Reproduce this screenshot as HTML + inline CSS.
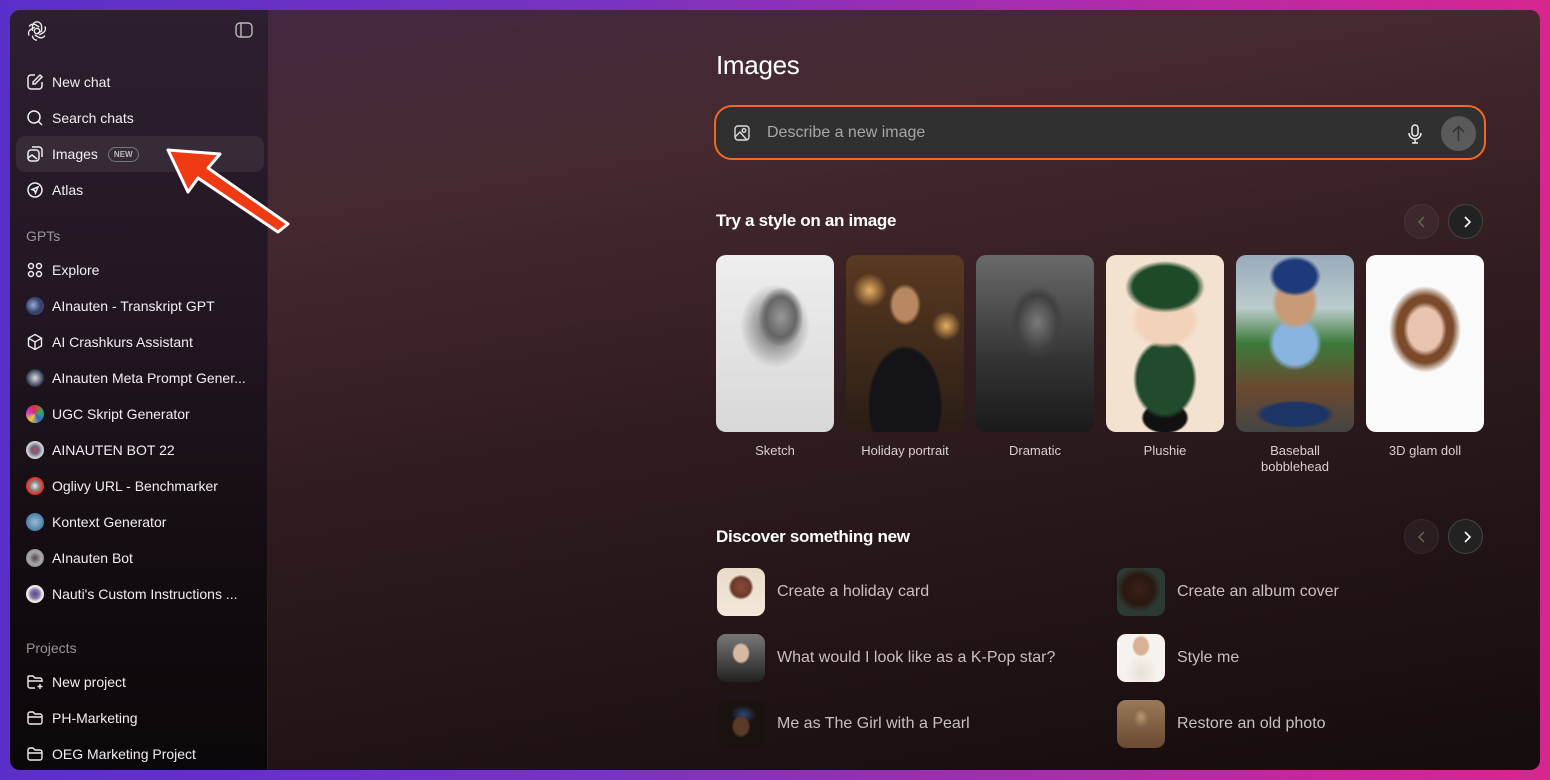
<!DOCTYPE html>
<html><head><meta charset="utf-8">
<style>
*{box-sizing:border-box;margin:0;padding:0}
body{width:1550px;height:780px;overflow:hidden;font-family:"Liberation Sans",sans-serif;background:linear-gradient(90deg,#5a2fc9 0%,#7a33c0 40%,#b52aa8 75%,#d8268f 100%);position:relative}
.win{position:absolute;left:10px;top:10px;width:1530px;height:760px;border-radius:10px;overflow:hidden;background:linear-gradient(170deg,#432843 0%,#45292f 25%,#2e1b1e 55%,#140c0d 100%)}
.side{position:absolute;left:0;top:0;width:258px;height:760px;background:linear-gradient(180deg,#2d1f2f 0%,#221622 40%,#120b10 75%,#0c0709 100%);border-right:1px solid #2a2028}
.it{position:absolute;left:16px;height:20px;display:flex;align-items:center;color:#f2eef2;font-size:14px}
.it svg,.it .av{width:18px;height:18px;margin-right:8px;flex:none}
.av{border-radius:50%}
.lab{position:absolute;left:16px;color:#9c9299;font-size:14px}
.main{position:absolute;left:706px;top:0}
h1{position:absolute;left:706px;top:40px;color:#fff;font-size:26px;font-weight:normal;letter-spacing:-0.3px}
.inp{position:absolute;left:704px;top:95px;width:772px;height:55px;border:2px solid #f06a24;border-radius:18px;background:#303030}
.inp .ph{position:absolute;left:51px;top:17px;color:#a7a7a7;font-size:16px}
.send{position:absolute;right:8px;top:9px;width:35px;height:35px;border-radius:50%;background:#5a5a5a}
h2{position:absolute;color:#fff;font-size:17px;font-weight:bold;letter-spacing:-0.3px}
.nav{position:absolute;width:35px;height:35px;border-radius:50%}
.nav.p{background:rgba(255,255,255,0.04);border:1px solid rgba(255,255,255,0.06)}
.nav.n{background:#222;border:1px solid #444}
.card{position:absolute;top:245px;width:118px;height:177px;border-radius:10px;overflow:hidden}
.cl{position:absolute;top:433px;width:118px;text-align:center;color:#d8d0d0;font-size:13px;line-height:16px}
.dt{position:absolute;width:48px;height:48px;border-radius:9px;overflow:hidden}
.dl{position:absolute;color:#c8c0c0;font-size:16px}
</style></head><body>
<div class="win">
<div class="side">
<svg style="position:absolute;left:16px;top:10px" width="22" height="22" viewBox="0 0 24 24" fill="none" stroke="#eee" stroke-width="1.5"><circle cx="12" cy="12" r="3"/><path d="M12 2a5 5 0 0 1 5 5v5l-5 3M12 2a5 5 0 0 0-5 5v5M3.4 7a5 5 0 0 1 6.8-1.8l4.3 2.5M20.6 7a5 5 0 0 1 -1.8 6.8l-4.3 2.5M20.6 17a5 5 0 0 1-6.8 1.8l-4.3-2.5M3.4 17a5 5 0 0 1 1.8-6.8l4.3-2.5M12 22a5 5 0 0 1-5-5"/></svg>
<svg style="position:absolute;left:225px;top:12px" width="18" height="16" viewBox="0 0 18 16" fill="none" stroke="#bbb" stroke-width="1.4"><rect x="1" y="1" width="16" height="14" rx="4"/><path d="M6 1v14"/></svg>
<div class="it" style="top:62px"><svg viewBox="0 0 18 18" fill="none" stroke="#eee" stroke-width="1.5"><path d="M9 2H5a3 3 0 0 0-3 3v8a3 3 0 0 0 3 3h8a3 3 0 0 0 3-3V9"/><path d="M14 2l2 2-7 7H7V9z"/></svg>New chat</div>
<div class="it" style="top:98px"><svg viewBox="0 0 18 18" fill="none" stroke="#eee" stroke-width="1.5"><circle cx="8" cy="8" r="6"/><path d="M12.5 12.5L16 16"/></svg>Search chats</div>
<div style="position:absolute;left:6px;top:126px;width:248px;height:36px;border-radius:9px;background:rgba(255,255,255,0.07)"></div>
<div class="it" style="top:134px"><svg viewBox="0 0 18 18" fill="none" stroke="#eee" stroke-width="1.5"><rect x="2" y="5" width="11" height="11" rx="3"/><path d="M6 2h7a3 3 0 0 1 3 3v7M2 13l4-3 5 4"/></svg>Images<span style="margin-left:10px;border:1px solid #777;border-radius:8px;font-size:8px;font-weight:bold;color:#bbb;padding:2px 5px">NEW</span></div>
<div class="it" style="top:170px"><svg viewBox="0 0 18 18" fill="none" stroke="#eee" stroke-width="1.5"><circle cx="9" cy="9" r="7"/><path d="M12 6L6 8.5 8.5 9.5 9.5 12z"/></svg>Atlas</div>
<div class="lab" style="top:218px">GPTs</div>
<div class="it" style="top:250px"><svg viewBox="0 0 18 18" fill="none" stroke="#eee" stroke-width="1.5"><circle cx="5" cy="5" r="2.5"/><circle cx="13" cy="5" r="2.5"/><circle cx="5" cy="13" r="2.5"/><circle cx="13" cy="13" r="2.5"/></svg>Explore</div>
<div class="it" style="top:286px"><span class="av" style="background:radial-gradient(circle at 40% 45%,#9ad 0,#346 50%,#5a3a8a 100%)"></span>AInauten - Transkript GPT</div>
<div class="it" style="top:322px"><svg viewBox="0 0 18 18" fill="none" stroke="#eee" stroke-width="1.4"><path d="M9 1.5l6.5 3.7v7.6L9 16.5l-6.5-3.7V5.2zM2.5 5.2L9 9l6.5-3.8M9 9v7.5"/></svg>AI Crashkurs Assistant</div>
<div class="it" style="top:358px"><span class="av" style="background:radial-gradient(circle,#ddd 0,#889 35%,#234 70%)"></span>AInauten Meta Prompt Gener...</div>
<div class="it" style="top:394px"><span class="av" style="background:conic-gradient(#d33,#3a6,#36c,#ec3,#c3c,#d33)"></span>UGC Skript Generator</div>
<div class="it" style="top:430px"><span class="av" style="background:radial-gradient(circle,#c44 0,#668 30%,#ccc 60%)"></span>AINAUTEN BOT 22</div>
<div class="it" style="top:466px"><span class="av" style="background:radial-gradient(circle,#eee 0,#888 35%,#d32 65%)"></span>Oglivy URL - Benchmarker</div>
<div class="it" style="top:502px"><span class="av" style="background:radial-gradient(circle,#9bd 0,#58a 60%,#357 100%)"></span>Kontext Generator</div>
<div class="it" style="top:538px"><span class="av" style="background:radial-gradient(circle,#545 0,#aaa 50%,#667 100%)"></span>AInauten Bot</div>
<div class="it" style="top:574px"><span class="av" style="background:radial-gradient(circle,#534a8a 0,#87a 35%,#eee 60%)"></span>Nauti's Custom Instructions ...</div>
<div class="lab" style="top:630px">Projects</div>
<div class="it" style="top:662px"><svg viewBox="0 0 18 18" fill="none" stroke="#eee" stroke-width="1.4"><path d="M9 15H4a2 2 0 0 1-2-2V4a1 1 0 0 1 1-1h4l2 2h5a2 2 0 0 1 2 2v2M2 8h14M14 11v5M11.5 13.5h5"/></svg>New project</div>
<div class="it" style="top:698px"><svg viewBox="0 0 18 18" fill="none" stroke="#eee" stroke-width="1.4"><path d="M2 5a2 2 0 0 1 2-2h3l2 2h5a2 2 0 0 1 2 2v6a2 2 0 0 1-2 2H4a2 2 0 0 1-2-2zM2 8h14"/></svg>PH-Marketing</div>
<div class="it" style="top:734px"><svg viewBox="0 0 18 18" fill="none" stroke="#eee" stroke-width="1.4"><path d="M2 5a2 2 0 0 1 2-2h3l2 2h5a2 2 0 0 1 2 2v6a2 2 0 0 1-2 2H4a2 2 0 0 1-2-2zM2 8h14"/></svg>OEG Marketing Project</div>
</div>

<h1>Images</h1>
<div class="inp">
<svg style="position:absolute;left:18px;top:18px" width="16" height="16" viewBox="0 0 16 16" fill="none" stroke="#ddd" stroke-width="1.4"><rect x="1" y="1" width="14" height="14" rx="3"/><circle cx="10" cy="5.5" r="1.8"/><path d="M1 12l5-5 7 8"/></svg>
<div class="ph">Describe a new image</div>
<svg style="position:absolute;left:692px;top:17px" width="14" height="20" viewBox="0 0 14 20" fill="none" stroke="#eee" stroke-width="1.5"><rect x="4" y="1" width="6" height="11" rx="3"/><path d="M1 9a6 6 0 0 0 12 0M7 15v4M4 19h6"/></svg>
<div class="send"><svg style="position:absolute;left:10px;top:9px" width="15" height="17" viewBox="0 0 15 17" fill="none" stroke="#333" stroke-width="1.6"><path d="M7.5 16V2M2 7l5.5-5.5L13 7"/></svg></div>
</div>

<h2 style="left:706px;top:201px">Try a style on an image</h2>
<div class="nav p" style="left:1394px;top:194px"><svg style="position:absolute;left:12px;top:11px" width="10" height="12" viewBox="0 0 10 12" fill="none" stroke="#665" stroke-width="1.5"><path d="M7 1L2 6l5 5"/></svg></div>
<div class="nav n" style="left:1438px;top:194px"><svg style="position:absolute;left:13px;top:11px" width="10" height="12" viewBox="0 0 10 12" fill="none" stroke="#fff" stroke-width="1.6"><path d="M3 1l5 5-5 5"/></svg></div>

<div class="card" style="left:706px;background:radial-gradient(ellipse 30px 40px at 55% 35%,#999 0,#666 50%,transparent 75%),radial-gradient(ellipse 50px 60px at 50% 40%,#555 0,transparent 70%),linear-gradient(#eee,#d8d8d8)"></div>
<div class="card" style="left:836px;background:radial-gradient(ellipse 20px 26px at 50% 28%,#b98860 0,#b98860 60%,transparent 80%),radial-gradient(ellipse 50px 80px at 50% 85%,#141418 0,#141418 70%,transparent 75%),radial-gradient(circle at 20% 20%,#e9b060 0,transparent 10%),radial-gradient(circle at 85% 40%,#e9b060 0,transparent 10%),linear-gradient(#5a3a22,#2a1d14)"></div>
<div class="card" style="left:966px;background:radial-gradient(ellipse 34px 45px at 52% 38%,#7a7a7a 0,#404040 60%,transparent 80%),linear-gradient(#6a6a6a,#333 60%,#1a1a1a)"></div>
<div class="card" style="left:1096px;background:radial-gradient(ellipse 40px 26px at 50% 18%,#1f4a2a 0,#1f4a2a 80%,transparent 100%),radial-gradient(ellipse 34px 28px at 50% 37%,#f2d2b8 0,#f2d2b8 80%,transparent 100%),radial-gradient(ellipse 40px 50px at 50% 70%,#224a2c 0,#224a2c 70%,transparent 80%),radial-gradient(ellipse 30px 20px at 50% 92%,#111 0,#111 70%,transparent 80%),#f3e2cf"></div>
<div class="card" style="left:1226px;background:radial-gradient(ellipse 26px 20px at 50% 12%,#1f3a7a 0,#1f3a7a 80%,transparent 100%),radial-gradient(ellipse 26px 30px at 50% 27%,#c89a78 0,#c89a78 70%,transparent 90%),radial-gradient(ellipse 30px 30px at 50% 50%,#8ab4e0 0,#8ab4e0 70%,transparent 90%),radial-gradient(ellipse 40px 14px at 50% 90%,#1c3566 0,#1c3566 80%,transparent 100%),linear-gradient(#9ab 0,#bcc 30%,#3a7a3a 50%,#6b4a30 75%,#444 100%)"></div>
<div class="card" style="left:1356px;background:radial-gradient(ellipse 24px 30px at 50% 42%,#e8c4b0 0,#e8c4b0 70%,transparent 90%),radial-gradient(ellipse 40px 48px at 50% 42%,#7a4a2a 0,#7a4a2a 70%,transparent 90%),#fafafa"></div>
<div class="cl" style="left:706px">Sketch</div>
<div class="cl" style="left:836px">Holiday portrait</div>
<div class="cl" style="left:966px">Dramatic</div>
<div class="cl" style="left:1096px">Plushie</div>
<div class="cl" style="left:1226px">Baseball<br>bobblehead</div>
<div class="cl" style="left:1356px">3D glam doll</div>

<h2 style="left:706px;top:517px">Discover something new</h2>
<div class="nav p" style="left:1394px;top:509px"><svg style="position:absolute;left:12px;top:11px" width="10" height="12" viewBox="0 0 10 12" fill="none" stroke="#665" stroke-width="1.5"><path d="M7 1L2 6l5 5"/></svg></div>
<div class="nav n" style="left:1438px;top:509px"><svg style="position:absolute;left:13px;top:11px" width="10" height="12" viewBox="0 0 10 12" fill="none" stroke="#fff" stroke-width="1.6"><path d="M3 1l5 5-5 5"/></svg></div>

<div class="dt" style="left:707px;top:558px;background:radial-gradient(ellipse 14px 14px at 50% 40%,#8a4a3a 0,#6a3a2a 70%,transparent 90%),linear-gradient(#e8dcc8,#f2e8da)"></div>
<div class="dl" style="left:767px;top:573px">Create a holiday card</div>
<div class="dt" style="left:1107px;top:558px;background:radial-gradient(circle at 45% 45%,#3a2018 0,#2a1810 40%,transparent 60%),#2d3a34"></div>
<div class="dl" style="left:1167px;top:573px">Create an album cover</div>
<div class="dt" style="left:707px;top:624px;background:radial-gradient(ellipse 10px 12px at 50% 40%,#d8b8a0 0,#d8b8a0 70%,transparent 90%),linear-gradient(#777,#222)"></div>
<div class="dl" style="left:767px;top:639px">What would I look like as a K-Pop star?</div>
<div class="dt" style="left:1107px;top:624px;background:radial-gradient(ellipse 10px 12px at 50% 25%,#d8b098 0,#d8b098 70%,transparent 90%),radial-gradient(ellipse 18px 20px at 50% 80%,#e8e0d6 0,transparent 90%),#f6f2ee"></div>
<div class="dl" style="left:1167px;top:639px">Style me</div>
<div class="dt" style="left:707px;top:690px;background:radial-gradient(ellipse 12px 14px at 50% 55%,#5a3a28 0,#5a3a28 60%,transparent 80%),radial-gradient(ellipse 14px 10px at 55% 30%,#2a4a7a 0,transparent 90%),#1a120e"></div>
<div class="dl" style="left:767px;top:705px">Me as The Girl with a Pearl</div>
<div class="dt" style="left:1107px;top:690px;background:radial-gradient(ellipse 10px 12px at 50% 35%,#b89a78 0,#8a6a4a 70%,transparent 90%),linear-gradient(#9a7a5a,#6a4a30)"></div>
<div class="dl" style="left:1167px;top:705px">Restore an old photo</div>
</div>

<svg style="position:absolute;left:160px;top:140px" width="140" height="95" viewBox="0 0 140 95"><path d="M8 10 L60 14 L48 28 L128 84 L118 92 L38 38 L28 52 Z" fill="#f03a14" stroke="#fff" stroke-width="3" stroke-linejoin="round"/></svg>
</body></html>
